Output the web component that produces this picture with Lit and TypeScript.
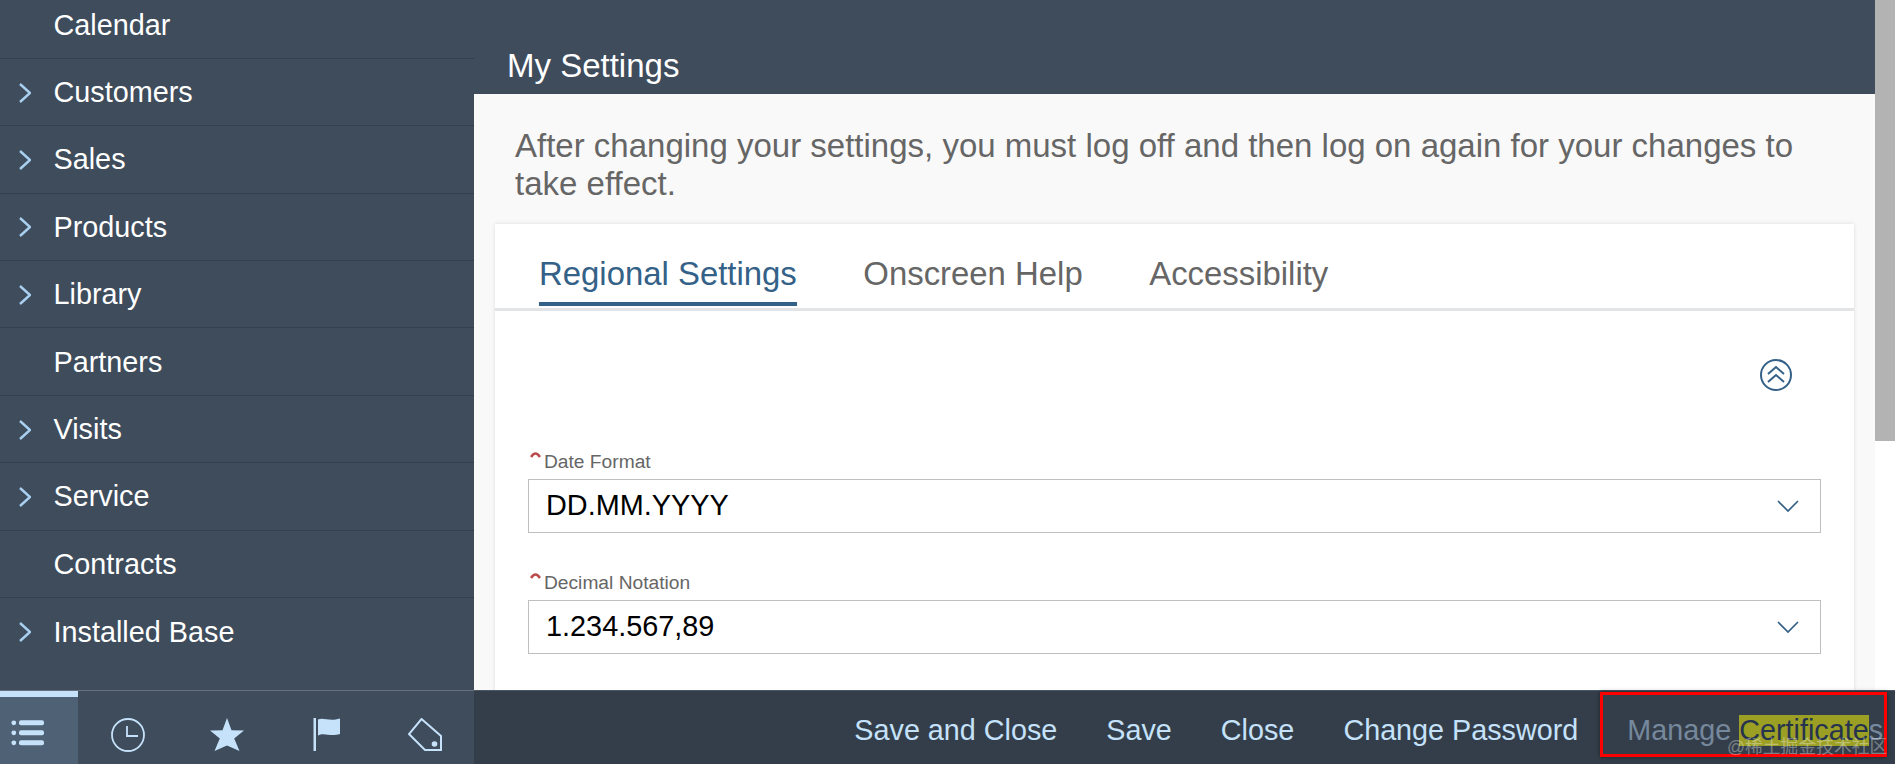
import { LitElement, html, css } from "lit";
import { customElement } from "lit/decorators.js";

const items: [string, boolean][] = [
  ["Calendar", false], ["Customers", true], ["Sales", true], ["Products", true], ["Library", true],
  ["Partners", false], ["Visits", true], ["Service", true], ["Contracts", false], ["Installed Base", true],
];

const chevron = html`<svg class="chev" viewBox="0 0 12 20"><path d="M1 1 L11 10 L1 19" fill="none" stroke="#a9d0f0" stroke-width="2.400"/></svg>`;
const down = html`<svg class="down" viewBox="0 0 22 13"><path d="M1 1 L11 11 L21 1" fill="none" stroke="#346187" stroke-width="1.700"/></svg>`;
const req = html`<svg class="req" viewBox="0 0 11 7"><path d="M1 6 Q5.500 -1 10 6" fill="none" stroke="#bb4a4a" stroke-width="2.600"/></svg>`;

const icons = [
  html`<svg class="ico" viewBox="0 0 34 34"><g fill="#c5e2fa"><circle cx="2.800" cy="2.800" r="2.400"/><circle cx="2.800" cy="12.800" r="2.400"/><circle cx="2.800" cy="22.800" r="2.400"/><rect x="8" y="0.300" width="25" height="5" rx="2"/><rect x="8" y="10.300" width="25" height="5" rx="2"/><rect x="8" y="20.300" width="25" height="5" rx="2"/></g></svg>`,
  html`<svg class="ico" viewBox="0 0 34 34"><g fill="none" stroke="#c5e2fa" stroke-width="1.800"><circle cx="17" cy="17" r="16"/><path d="M16 8 V18 H27"/></g></svg>`,
  html`<svg class="ico" viewBox="0 0 34 34"><path fill="#c5e2fa" d="M17 0 L21.500 12.300 L34 12.600 L24.200 20.500 L29.500 33 L17 27.500 L4.500 33 L9.800 20.500 L0 12.600 L12.500 12.300 Z"/></svg>`,
  html`<svg class="ico" viewBox="0 0 34 34"><rect x="4.500" y="0" width="2.500" height="33" fill="#c5e2fa"/><path fill="#c5e2fa" d="M9 1.500 C15 -1 20 4 31 0.500 V16 C21 19 15 14 9 17.500 Z"/></svg>`,
  html`<svg class="ico" viewBox="0 0 34 34"><path fill="none" stroke="#c5e2fa" stroke-width="2" d="M13.500 1 L33 18 V32 H17 L1 16 Z"/><circle cx="26.500" cy="26" r="2.800" fill="#c5e2fa"/></svg>`,
];

@customElement("app-root")
export class AppRoot extends LitElement {
  static styles = css`
    :host { display: block; width: 1895px; height: 764px; overflow: hidden; position: relative; font-family: "Liberation Sans", Arial, sans-serif; background: #fff; }
    .top { display: flex; height: 690px; }
    .side { width: 474px; flex: none; background: #3e4c5c; overflow: hidden; }
    .list { margin-top: -8.500px; }
    .row { height: 67.400px; box-sizing: border-box; border-bottom: 1px solid #334050; display: flex; align-items: center; color: #fff; font-size: 28.800px; padding: 1px 0 0 19px; }
    .row:last-child { border-bottom: none; }
    .slot { width: 34.500px; flex: none; display: flex; }
    .chev { width: 12px; height: 20px; }
    .main { width: 1401px; flex: none; background: #f9f9f9; overflow: hidden; }
    .head { height: 94px; box-sizing: border-box; background: #3e4c5c; color: #fff; font-size: 33px; padding: 47px 0 0 33px; line-height: 38px; }
    .bar { width: 20px; flex: none; background: #fff; }
    .thumb { height: 441px; background: #b3b3b3; }
    .intro { color: #666; font-size: 33px; line-height: 37.500px; margin: 0; padding: 33px 60px 0 41px; height: 130px; box-sizing: border-box; }
    .card { margin: 0 21px; background: #fff; height: 500px; box-shadow: 0 0 4px rgba(0,0,0,.12); }
    .tabs { height: 87px; box-sizing: border-box; border-bottom: 3px solid #e3e4e5; display: flex; gap: 66.500px; padding-left: 44px; }
    .tab { font-size: 32.900px; color: #666; height: 84px; box-sizing: border-box; padding-top: 30px; line-height: 40px; }
    .tab.on { color: #346187; border-bottom: 4px solid #346187; height: 82px; }
    .body { padding: 0 33px; }
    .collapse { display: flex; justify-content: flex-end; padding: 48px 29px 0 0; height: 76px; box-sizing: border-box; }
    .collapse svg { width: 32px; height: 32px; }
    .lab { font-size: 19.200px; color: #666; line-height: 22px; padding-left: 16px; position: relative; }
    .req { position: absolute; left: 2px; top: 0; width: 11px; height: 7px; }
    .field { height: 54px; box-sizing: border-box; border: 1px solid #bfbfbf; background: #fff; display: flex; align-items: center; justify-content: space-between; padding: 0 21px 2px 17px; font-size: 28.850px; color: #000; margin-top: 6px; }
    .down { width: 22px; height: 13px; margin-top: 2px; }
    .group + .group { margin-top: 39px; }
    .group.first { padding-top: 64px; }
    .bottom { display: flex; height: 74px; background: #343e4a; border-top: 1px solid #4a5866; box-sizing: border-box; }
    .tools { width: 474px; flex: none; background: #3e4c5c; display: flex; border-top: 1px solid #66717c; margin-top: -1px; }
    .tool { display: flex; justify-content: center; align-items: flex-start; padding-top: 27px; box-sizing: border-box; width: 99px; }
    .tool.on { width: 78px; background: #4f6174; border-top: 6px solid #c5e2fa; padding: 23px 22px 0 0; }
    .ico { width: 34px; height: 34px; flex: none; }
    .actions { flex: 1; display: flex; align-items: center; justify-content: flex-end; gap: 49px; padding: 5px 12px 0 0; color: #c5e2fa; font-size: 28.750px; white-space: nowrap; }
    .disabled { color: #76889c; }
    .mark { display: inline-block; background: #9b9f24; color: #26334f; line-height: 31px; }
    .box { position: absolute; left: 1600px; top: 692px; width: 287px; height: 65px; box-sizing: border-box; border: 3px solid #f00; box-shadow: 0 0 4px rgba(0,0,0,.5); pointer-events: none; }
    .wm { position: absolute; left: 1727px; top: 736px; font-size: 17.800px; line-height: 22px; color: rgba(255,255,255,.35); font-family: "Liberation Sans", "Noto Sans CJK SC", sans-serif; white-space: nowrap; }
  `;

  render() {
    return html`
      <div class="top">
        <nav class="side">
          <div class="list">
            ${items.map(([t, c]) => html`<div class="row"><span class="slot">${c ? chevron : ""}</span>${t}</div>`)}
          </div>
        </nav>
        <div class="main">
          <div class="head">My Settings</div>
          <p class="intro">After changing your settings, you must log off and then log on again for your changes to take effect.</p>
          <div class="card">
            <div class="tabs">
              <div class="tab on">Regional Settings</div>
              <div class="tab">Onscreen Help</div>
              <div class="tab">Accessibility</div>
            </div>
            <div class="body">
              <div class="collapse">
                <svg viewBox="0 0 32 32"><g fill="none" stroke="#346187" stroke-width="2"><circle cx="16" cy="16" r="15"/><path d="M8 15 L16 8 L24 15 M8 23 L16 16 L24 23"/></g></svg>
              </div>
              <div class="group first">
                <div class="lab">${req}Date Format</div>
                <div class="field">DD.MM.YYYY ${down}</div>
              </div>
              <div class="group">
                <div class="lab">${req}Decimal Notation</div>
                <div class="field">1.234.567,89 ${down}</div>
              </div>
            </div>
          </div>
        </div>
        <div class="bar"><div class="thumb"></div></div>
      </div>
      <div class="bottom">
        <div class="tools">
          ${icons.map((ic, i) => html`<div class="tool ${i === 0 ? "on" : ""}">${ic}</div>`)}
        </div>
        <div class="actions">
          <span>Save and Close</span>
          <span>Save</span>
          <span>Close</span>
          <span>Change Password</span>
          <span class="disabled">Manage <span class="mark">Certificate</span>s</span>
        </div>
      </div>
      <div class="box"></div>
      <div class="wm">@稀土掘金技术社区</div>
    `;
  }
}
